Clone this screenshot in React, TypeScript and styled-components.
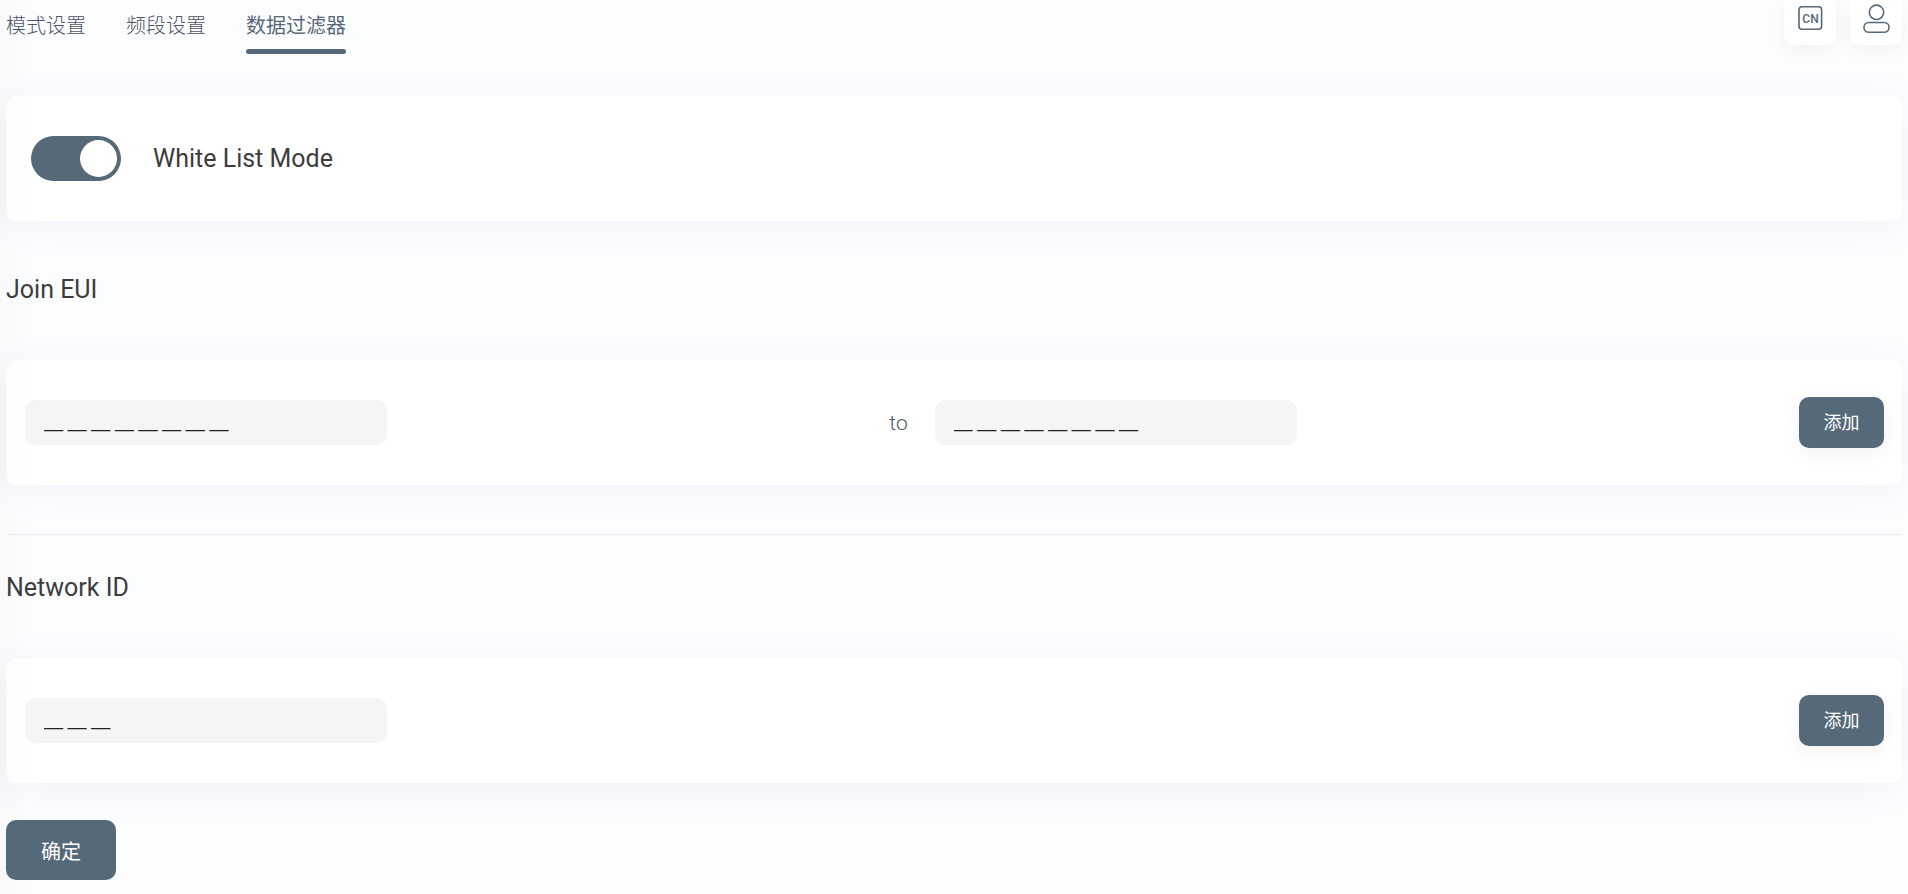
import React, { useState } from "react";
import styled, { createGlobalStyle } from "styled-components";

const slate = "#566978";

const GlobalStyle = createGlobalStyle`
  * { box-sizing: border-box; }
  body {
    margin: 0;
    min-height: 100vh;
    background: linear-gradient(to right, #f8f9fb, #fcfdff 30px);
    color: #3c3c3c;
    font-family: Roboto, "Noto Sans CJK SC", sans-serif;
  }
  button, input { font-family: inherit; }
`;

const Page = styled.div`
  padding: 0 6px 14px;
  overflow: hidden;
`;

const Header = styled.header`
  display: flex;
  align-items: flex-start;
  justify-content: space-between;
  height: 96px;
`;

const Tabs = styled.nav`
  display: flex;
  gap: 40px;
`;

const Tab = styled.a<{ $active?: boolean }>`
  height: 54px;
  padding-top: 11px;
  color: ${(p) => (p.$active ? slate : "#4c5468")};
  font-size: 20px;
  line-height: 30px;
  font-weight: ${(p) => (p.$active ? 400 : 300)};
  text-decoration: none;

  &::after {
    content: "";
    display: block;
    height: 5px;
    margin-top: 8px;
    border-radius: 3px;
    background: ${(p) => (p.$active ? slate : "transparent")};
  }
`;

const Tools = styled.div`
  display: flex;
  gap: 14px;
`;

const ToolButton = styled.button`
  display: flex;
  justify-content: center;
  width: 52px;
  height: 45px;
  padding: 3px 0 0;
  border: 0;
  border-radius: 0 0 10px 10px;
  background: #fff;
  box-shadow: 0 5px 20px rgba(0, 0, 0, 0.05);
  color: ${slate};
`;

const Card = styled.section`
  display: flex;
  align-items: center;
  justify-content: space-between;
  height: 125px;
  padding: 0 18px 0 19px;
  border-radius: 10px;
  background: linear-gradient(to right, #fcfcfd, #fff 24px);
  box-shadow: 0 5px 40px rgba(80, 80, 160, 0.07);
`;

const SwitchLabel = styled.label`
  display: flex;
  align-items: center;
  gap: 32px;
  padding-left: 6px;
  font-size: 25px;
  line-height: 30px;
`;

const Switch = styled.input`
  appearance: none;
  display: flex;
  align-items: center;
  width: 90px;
  height: 45px;
  margin: 0;
  padding: 0 4px;
  border-radius: 23px;
  background: #c5ccd2;

  &::before {
    content: "";
    width: 37px;
    height: 37px;
    border-radius: 50%;
    background: #fff;
  }
  &:checked {
    justify-content: flex-end;
    background: ${slate};
  }
`;

const Heading = styled.h2`
  margin: 54px 0 55px;
  font-size: 25px;
  font-weight: 400;
  line-height: 30px;
`;

const Field = styled.label`
  display: flex;
  align-items: center;
  gap: 27px;
  color: #4c5468;
  font-size: 21px;
  font-weight: 300;
`;

const TextBox = styled.input`
  width: 362px;
  height: 45px;
  padding: 0 19px;
  border: 0;
  border-radius: 10px;
  outline: 0;
  background: #f5f5f5;
  color: #222;
  font-family: "Liberation Sans", sans-serif;
  font-size: 17px;
`;

const AddButton = styled.button`
  width: 85px;
  height: 51px;
  padding: 0 0 3px;
  border: 0;
  border-radius: 10px;
  background: ${slate};
  box-shadow: 0 5px 20px rgba(0, 0, 0, 0.06);
  color: #fff;
  font-size: 18px;
`;

const Divider = styled.hr`
  height: 1px;
  margin: 49px 0 0;
  border: 0;
  background: #e8eaed;
`;

const NetworkHeading = styled(Heading)`
  margin: 38px 0 55px;
`;

const Submit = styled.button`
  display: block;
  width: 110px;
  height: 60px;
  margin-top: 37px;
  padding: 0;
  border: 0;
  border-radius: 10px;
  background: ${slate};
  color: #fff;
  font-size: 20px;
`;

const LanguageIcon = () => (
  <svg width="26" height="30" viewBox="0 0 26 30" aria-hidden="true">
    <rect x="2" y="3.7" width="22.6" height="22.6" rx="3" fill="none" stroke="currentColor" strokeWidth="1.6" />
    <text x="13.5" y="19.5" textAnchor="middle" fontSize="12" fontWeight="500" fill="currentColor">CN</text>
  </svg>
);

const UserIcon = () => (
  <svg width="28" height="32" viewBox="0 0 28 32" fill="none" stroke="currentColor" strokeWidth="1.6" aria-hidden="true">
    <circle cx="14.5" cy="9.3" r="7.2" />
    <rect x="2" y="19.5" width="25" height="9.8" rx="4.9" />
  </svg>
);

export default function App() {
  const [whiteList, setWhiteList] = useState(true);
  return (
    <>
      <GlobalStyle />
      <Page>
        <Header>
          <Tabs>
            <Tab href="#mode">模式设置</Tab>
            <Tab href="#band">频段设置</Tab>
            <Tab href="#filter" $active>数据过滤器</Tab>
          </Tabs>
          <Tools>
            <ToolButton type="button" aria-label="Language"><LanguageIcon /></ToolButton>
            <ToolButton type="button" aria-label="Account"><UserIcon /></ToolButton>
          </Tools>
        </Header>
        <Card>
          <SwitchLabel>
            <Switch
              type="checkbox"
              role="switch"
              checked={whiteList}
              onChange={(e) => setWhiteList(e.target.checked)}
            />
            White List Mode
          </SwitchLabel>
        </Card>
        <Heading>Join EUI</Heading>
        <Card>
          <TextBox aria-label="Join EUI start" defaultValue="__ __ __ __ __ __ __ __" />
          <Field>
            to
            <TextBox defaultValue="__ __ __ __ __ __ __ __" />
          </Field>
          <AddButton type="button">添加</AddButton>
        </Card>
        <Divider />
        <NetworkHeading>Network ID</NetworkHeading>
        <Card>
          <TextBox aria-label="Network ID" defaultValue="__ __ __" />
          <AddButton type="button">添加</AddButton>
        </Card>
        <Submit type="button">确定</Submit>
      </Page>
    </>
  );
}
